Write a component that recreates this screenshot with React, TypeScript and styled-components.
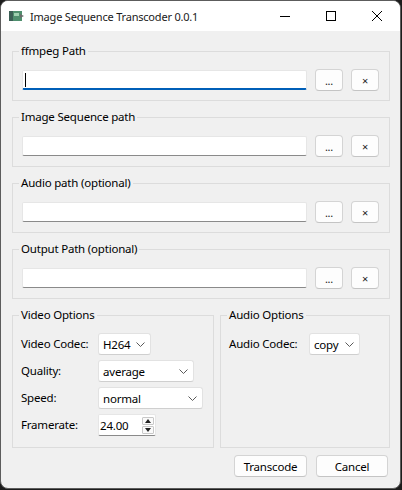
import React from 'react';
import styled, { createGlobalStyle } from 'styled-components';

const Global = createGlobalStyle`
  html, body { margin: 0; padding: 0; background: #1c1c1c; }
  body { font-family: "Segoe UI", "Noto Sans", sans-serif; font-size: 11.5px; color: #000; letter-spacing: -0.2px; }
  * { box-sizing: border-box; }
`;

const Window = styled.div`
  width: 401px;
  height: 489px;
  border: 1px solid #5c5c5c;
  border-radius: 8px;
  overflow: hidden;
  display: flex;
  flex-direction: column;
  background: #f0f0f0;
`;

const TitleBar = styled.div`
  height: 30px;
  background: #ffffff;
  display: flex;
  align-items: center;
  flex-shrink: 0;
`;

const AppIcon = styled.div`
  width: 29px;
  display: flex;
  justify-content: center;
  padding-left: 2px;
`;

const TitleText = styled.div`
  flex: 1;
  font-size: 11px;
  letter-spacing: -0.2px;
  color: #1a1a1a;
  padding-top: 1px;
`;

const CtrlButton = styled.div`
  width: 46px;
  height: 30px;
  display: flex;
  align-items: center;
  justify-content: center;
`;

const Body = styled.div`
  flex: 1;
  display: flex;
  flex-direction: column;
  gap: 8px;
  padding: 12px 10px 0 11px;
`;

const Group = styled.fieldset<{ $grow?: boolean }>`
  margin: 0;
  min-width: 0;
  border: 1px solid #dcdcdc;
  border-radius: 0;
  padding: ${p => (p.$grow ? '10px 8px 11px 8px' : '10px 10px 9px 9px')};
`;

const Legend = styled.legend<{ $grow?: boolean }>`
  padding: 0 2px;
  margin-left: ${p => (p.$grow ? '-2px' : '-3px')};
  line-height: 16px;
  color: #000;
`;

const PathRow = styled.div`
  display: flex;
  align-items: center;
  gap: 8px;
`;

const PathInput = styled.div<{ $focused?: boolean }>`
  flex: 1;
  height: 20px;
  background: #ffffff;
  border: 1px solid #e6e6e6;
  border-bottom: ${p => (p.$focused ? '2px solid #005fb8' : '1px solid #8a8a8a')};
  border-radius: 2px;
  display: flex;
  align-items: center;
  padding-left: 2px;
`;

const Caret = styled.div`
  width: 1px;
  height: 14px;
  background: #000;
`;

const SmallButton = styled.div`
  width: 28px;
  height: 22px;
  background: #fdfdfd;
  border: 1px solid #d4d4d4;
  border-bottom-color: #c4c4c4;
  border-radius: 4px;
  display: flex;
  align-items: center;
  justify-content: center;
  font-size: 11px;
  color: #222;
`;

const OptionsRow = styled.div`
  display: grid;
  grid-template-columns: 202px 170px;
  gap: 6px;
`;

const FormGrid = styled.div<{ $label: number }>`
  display: grid;
  grid-template-columns: ${p => p.$label}px auto;
  justify-content: start;
  row-gap: 5px;
  align-items: center;
`;

const Label = styled.div`
  line-height: 22px;
`;

const Combo = styled.div<{ $w: number }>`
  width: ${p => p.$w}px;
  height: 22px;
  background: #ffffff;
  border: 1px solid #e2e2e2;
  border-bottom-color: #cfcfcf;
  border-radius: 3px;
  display: flex;
  align-items: center;
  justify-content: space-between;
  padding: 0 5px 0 4px;
`;

const Spin = styled.div`
  width: 58px;
  height: 22px;
  background: #ffffff;
  border: 1px solid #e6e6e6;
  border-bottom: 1px solid #8a8a8a;
  border-radius: 2px;
  display: flex;
  align-items: center;
  justify-content: space-between;
  padding: 0 1px 0 1px;
`;

const SpinArrows = styled.div`
  display: flex;
  flex-direction: column;
  gap: 1px;
`;

const SpinArrow = styled.div`
  width: 12px;
  height: 8px;
  border: 1px solid #c8c8c8;
  border-radius: 1px;
  background: #fafafa;
  display: flex;
  align-items: center;
  justify-content: center;
`;

const Footer = styled.div`
  display: flex;
  justify-content: flex-end;
  gap: 9px;
  padding-right: 2px;
  margin-top: -1px;
`;

const DialogButton = styled.div<{ $w: number }>`
  width: ${p => p.$w}px;
  height: 22px;
  background: #fdfdfd;
  border: 1px solid #d4d4d4;
  border-bottom-color: #c4c4c4;
  border-radius: 4px;
  display: flex;
  align-items: center;
  justify-content: center;
`;

const Chevron = () => (
  <svg width="9" height="5" viewBox="0 0 9 5">
    <polyline points="0.5,0.5 4.5,4.5 8.5,0.5" fill="none" stroke="#5a5a5a" strokeWidth="1" />
  </svg>
);

const PathGroup = ({ title, focused }: { title: string; focused?: boolean }) => (
  <Group>
    <Legend>{title}</Legend>
    <PathRow>
      <PathInput $focused={focused}>{focused && <Caret />}</PathInput>
      <SmallButton>...</SmallButton>
      <SmallButton>×</SmallButton>
    </PathRow>
  </Group>
);

export default function App() {
  return (
    <>
      <Global />
      <Window>
        <TitleBar>
          <AppIcon>
            <svg width="15" height="12" viewBox="0 0 15 12">
              <rect x="0" y="1" width="13" height="10" fill="#4f8f6e" />
              <rect x="0" y="1" width="4" height="10" fill="#3b5f55" />
              <rect x="5" y="3" width="5" height="3" fill="#9fd0b0" />
              <polygon points="11,4 15,6 11,8" fill="#6b6b6b" />
            </svg>
          </AppIcon>
          <TitleText>Image Sequence Transcoder 0.0.1</TitleText>
          <CtrlButton>
            <svg width="10" height="10" viewBox="0 0 10 10">
              <line x1="0" y1="5.5" x2="10" y2="5.5" stroke="#000" strokeWidth="1" />
            </svg>
          </CtrlButton>
          <CtrlButton>
            <svg width="10" height="10" viewBox="0 0 10 10">
              <rect x="0.5" y="0.5" width="9" height="9" fill="none" stroke="#000" strokeWidth="1" />
            </svg>
          </CtrlButton>
          <CtrlButton>
            <svg width="10" height="10" viewBox="0 0 10 10">
              <line x1="0" y1="0" x2="10" y2="10" stroke="#000" strokeWidth="1" />
              <line x1="10" y1="0" x2="0" y2="10" stroke="#000" strokeWidth="1" />
            </svg>
          </CtrlButton>
        </TitleBar>
        <Body>
          <PathGroup title="ffmpeg Path" focused />
          <PathGroup title="Image Sequence path" />
          <PathGroup title="Audio path (optional)" />
          <PathGroup title="Output Path (optional)" />
          <OptionsRow>
            <Group $grow>
              <Legend $grow>Video Options</Legend>
              <FormGrid $label={77}>
                <Label>Video Codec:</Label>
                <Combo $w={53}>H264<Chevron /></Combo>
                <Label>Quality:</Label>
                <Combo $w={96}>average<Chevron /></Combo>
                <Label>Speed:</Label>
                <Combo $w={105}>normal<Chevron /></Combo>
                <Label>Framerate:</Label>
                <Spin>
                  <span>24.00</span>
                  <SpinArrows>
                    <SpinArrow>
                      <svg width="6" height="4" viewBox="0 0 6 4"><polygon points="0,4 3,0 6,4" fill="#222" /></svg>
                    </SpinArrow>
                    <SpinArrow>
                      <svg width="6" height="4" viewBox="0 0 6 4"><polygon points="0,0 6,0 3,4" fill="#222" /></svg>
                    </SpinArrow>
                  </SpinArrows>
                </Spin>
              </FormGrid>
            </Group>
            <Group $grow>
              <Legend $grow>Audio Options</Legend>
              <FormGrid $label={80}>
                <Label>Audio Codec:</Label>
                <Combo $w={51}>copy<Chevron /></Combo>
              </FormGrid>
            </Group>
          </OptionsRow>
          <Footer>
            <DialogButton $w={73}>Transcode</DialogButton>
            <DialogButton $w={72}>Cancel</DialogButton>
          </Footer>
        </Body>
      </Window>
    </>
  );
}
